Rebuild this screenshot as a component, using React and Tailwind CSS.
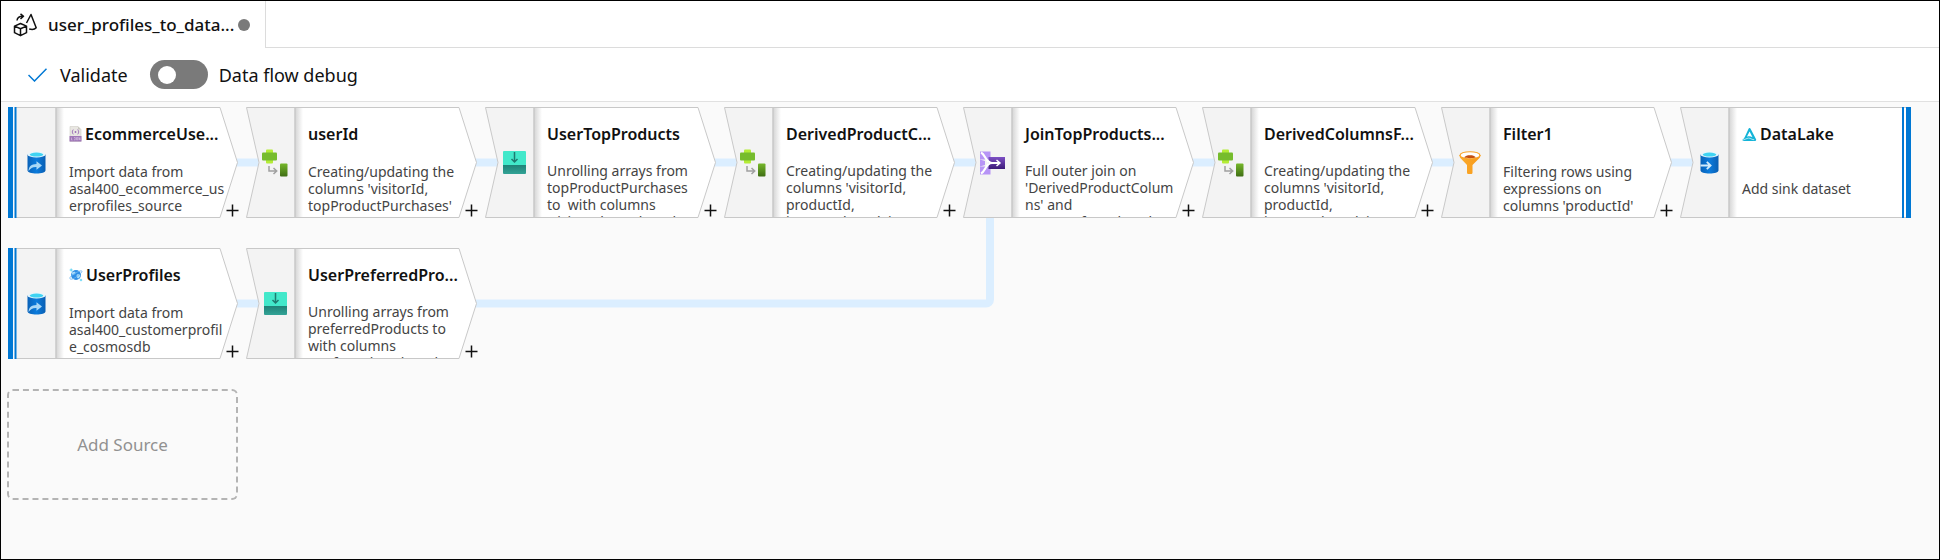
const SourceIcon = () => (
  <svg width="19" height="23" viewBox="0 0 19 23" aria-hidden="true">
    <defs>
      <linearGradient id="srcBody" x1="0" y1="0" x2="1" y2="0">
        <stop offset="0" stopColor="#0a62b8" />
        <stop offset="0.5" stopColor="#0b7bdc" />
        <stop offset="1" stopColor="#0a5fb3" />
      </linearGradient>
    </defs>
    <path d="M0.5 3.5v16c0 1.7 4 3 9 3s9-1.300 9-3v-16z" fill="url(#srcBody)" />
    <ellipse cx="9.500" cy="3.500" rx="9" ry="3" fill="#e6f5fc" />
    <ellipse cx="9.500" cy="3.600" rx="6.800" ry="2" fill="#3fd3f2" />
    <path d="M1.500 20c0.300-4.500 2.800-6.900 8-7v-2.700l5.500 4.300-5.500 4.200v-2.800c-4-0.200-5.500 1-8 4z" fill="#a9d8f6" />
  </svg>
);

const SinkIcon = () => (
  <svg width="19" height="23" viewBox="0 0 19 23" aria-hidden="true">
    <defs>
      <linearGradient id="sinkBody" x1="0" y1="0" x2="1" y2="0">
        <stop offset="0" stopColor="#0a62b8" />
        <stop offset="0.500" stopColor="#0b7bdc" />
        <stop offset="1" stopColor="#0a5fb3" />
      </linearGradient>
    </defs>
    <path d="M0.5 3.5v16c0 1.7 4 3 9 3s9-1.300 9-3v-16z" fill="url(#sinkBody)" />
    <ellipse cx="9.500" cy="3.500" rx="9" ry="3" fill="#e6f5fc" />
    <ellipse cx="9.500" cy="3.600" rx="6.800" ry="2" fill="#3fd3f2" />
    <path d="M0.500 14.500h9.500M6.800 10.800l3.800 3.700-3.800 3.700" fill="none" stroke="#d3ecfb" strokeWidth="1.800" />
  </svg>
);

const DerivedIcon = () => (
  <svg width="26" height="28" viewBox="0 0 26 28" aria-hidden="true">
    <defs>
      <linearGradient id="derCol" x1="0" y1="0" x2="0" y2="1">
        <stop offset="0" stopColor="#76b82a" />
        <stop offset="1" stopColor="#3f6d14" />
      </linearGradient>
    </defs>
    <rect x="4" y="0.500" width="7" height="14" rx="1" fill="#b4ec36" />
    <rect x="0" y="3.500" width="15" height="8" rx="1" fill="#76bc2d" />
    <path d="M7 17v5h7.500M11.500 19l3.200 3-3.200 3" fill="none" stroke="#a0a0a0" strokeWidth="1.500" />
    <rect x="18" y="14.500" width="7.500" height="13" rx="1" fill="url(#derCol)" />
  </svg>
);

const FlattenIcon = () => (
  <svg width="23" height="23" viewBox="0 0 23 23" aria-hidden="true">
    <defs>
      <linearGradient id="flatBase" x1="0" y1="0" x2="0" y2="1">
        <stop offset="0" stopColor="#1f8277" />
        <stop offset="1" stopColor="#32a396" />
      </linearGradient>
    </defs>
    <path d="M1 0h21a1 1 0 0 1 1 1v13H0V1a1 1 0 0 1 1-1z" fill="#42e8ca" />
    <path d="M0 14h23v8a1 1 0 0 1-1 1H1a1 1 0 0 1-1-1z" fill="url(#flatBase)" />
    <path d="M11.500 1v10M8.500 8l3 3 3-3" fill="none" stroke="#1f7a70" strokeWidth="1.500" />
  </svg>
);

const JoinIcon = () => (
  <svg width="25" height="24" viewBox="0 0 25 24" aria-hidden="true">
    <defs>
      <linearGradient id="joinOut" x1="0" y1="0" x2="0" y2="1">
        <stop offset="0" stopColor="#7c4fc4" />
        <stop offset="1" stopColor="#3c1a78" />
      </linearGradient>
    </defs>
    <path d="M0 0.500h10.500v8H0zM0 15.500h10.500v8H0z" fill="#b794f6" />
    <path d="M0 8.500l5 1.500v4l-5 1.500z" fill="#b794f6" />
    <path d="M8.500 6H25v12H8.500z" fill="url(#joinOut)" />
    <path d="M1 1.500c4.500 2 4.500 10.500 11 10.500h7.500M1 22.500c4.500-2 4.500-10.500 11-10.500" fill="none" stroke="#ffffff" strokeWidth="2.200" />
    <path d="M16.500 9l3.500 3-3.500 3" fill="none" stroke="#ffffff" strokeWidth="1.500" />
  </svg>
);

const FilterIcon = () => (
  <svg width="22" height="23" viewBox="0 0 22 23" aria-hidden="true">
    <defs>
      <linearGradient id="funnel" x1="0" y1="0" x2="1" y2="0">
        <stop offset="0" stopColor="#fbab2c" />
        <stop offset="1" stopColor="#f79a1b" />
      </linearGradient>
    </defs>
    <path d="M0.500 4c0 2 0.800 3 1.800 4l5.700 6v7.500c0 1 0.800 1.500 1.500 1.500h2.500c0.800 0 1.500-0.500 1.500-1.500V14l6-6c1-1 2-2 2-4z" fill="url(#funnel)" />
    <ellipse cx="11" cy="4.200" rx="10.500" ry="4" fill="#f9a52a" />
    <ellipse cx="11" cy="4.200" rx="9.300" ry="3" fill="#ffffff" />
    <path d="M5.200 6.300c1-1.500 3.200-2.100 5.800-2.100s4.800 0.600 5.800 2.100c-1.500 0.600-3.500 0.900-5.800 0.900s-4.300-0.300-5.800-0.900z" fill="#c4500f" />
  </svg>
);

const JsonIcon = () => (
  <svg width="13" height="16" viewBox="0 0 13 16" className="shrink-0" aria-hidden="true">
    <path d="M1 0.500h8l3 3v12H1z" fill="#e9e7e2" stroke="#cfccc6" strokeWidth="0.600" />
    <path d="M9 0.500v3h3z" fill="#c9c6bf" />
    <path d="M4.500 3.800c-1 0-0.900 0.500-0.900 1.200 0 0.600-0.200 0.900-0.700 0.900 0.500 0 0.700 0.400 0.700 1 0 0.700 0 1.200 0.900 1.200M8.500 3.800c1 0 0.900 0.500 0.900 1.200 0 0.600 0.200 0.900 0.700 0.900-0.500 0-0.700 0.400-0.700 1 0 0.700 0 1.200-0.900 1.200" fill="none" stroke="#9a6cb4" strokeWidth="0.900" />
    <circle cx="6.500" cy="6" r="0.900" fill="#9a6cb4" />
    <rect x="0.500" y="10" width="12" height="5.500" fill="#a077b8" />
    <path d="M2.500 11.500v2.500h1M5 11.500h1.200v2.300H5M7.500 11.500h1.200v2.300H7.500zM10 14v-2.500l1 2.500v-2.500" fill="none" stroke="#dccbe6" strokeWidth="0.600" />
  </svg>
);

const CosmosIcon = () => (
  <svg width="14" height="14" viewBox="0 0 14 14" className="shrink-0" aria-hidden="true">
    <circle cx="7" cy="7" r="5" fill="#2f8fe6" />
    <path d="M3 4.500c2-1.500 4-0.500 3.500 0.800S4 7 2.600 6.300zM8 6.500c1.500-0.500 3 0 3.500 1.500l-2 2.500c-1.500 0-2.500-3-1.500-4z" fill="#a7dcfb" />
    <path d="M1 10.800C0 9.500 3 7 6.500 5S13 2.200 13 3.300 11 6.500 7.500 8.800 1.800 11.800 1 10.800z" fill="none" stroke="#6fb4ef" strokeWidth="0.800" />
    <path d="M2.200 0.500v3M0.700 2h3M12 10.800v2.400M10.800 12h2.400" stroke="#5ad3f5" strokeWidth="1" />
  </svg>
);

const LakeIcon = () => (
  <svg width="15" height="15" viewBox="0 0 16 15" className="shrink-0" aria-hidden="true">
    <path d="M8 0.500c0.700 0 1 0.500 1.300 1.100l5.700 11c0.400 0.900 0 1.700-1 1.700H2.500c-1 0-1.800-0.300-2.300-0.900 1.400-1 2.300-2.200 3-3.700L7 1.400c0.200-0.500 0.500-0.900 1-0.900z" fill="#14b4d8" />
    <path d="M8.100 4.200L5.200 9.800c2.600-1 4.200-0.300 6 0.600z" fill="#ffffff" />
    <path d="M1.500 13c3.500-0.600 4.500-2.300 7-1.400 1.500 0.500 2.500 1.500 4.500 1.400" fill="none" stroke="#ffffff" strokeWidth="0.700" />
  </svg>
);

const DataflowIcon = () => (
  <svg width="24" height="24" viewBox="0 0 24 24" fill="none" stroke="#111111" strokeWidth="1.500" strokeLinejoin="round" className="shrink-0" aria-hidden="true">
    <path d="M7.500 10.500l6 2.600v6.600l-6 3-6-3v-6.600zM1.500 13.100l6 2.600 6-2.600M7.500 15.700v7" />
    <path d="M13.500 10l4.500-8.500 5.200 13.200c-1.400 1.700-4.500 2-7 1.300" />
    <path d="M4 7.500c0.300-2.700 2-4.200 5.500-4.200M7.500 0.800l3 2.500-3 2.700" />
  </svg>
);

const ICONS = {
  source: SourceIcon,
  sink: SinkIcon,
  derived: DerivedIcon,
  flatten: FlattenIcon,
  join: JoinIcon,
  filter: FilterIcon,
};

const BADGES = { json: JsonIcon, cosmos: CosmosIcon, lake: LakeIcon };

const OUTLINES = {
  source: { shape: "M9 0.500H213L230.500 55.500L213 110.500H9", strip: "M9 0.500H49V110.500H9z" },
  step: {
    shape: "M0.500 0.500H213L230.500 55.500L213 110.500H0.500L13 55.500z",
    strip: "M0.500 0.500H49V110.500H0.500L13 55.500z",
  },
  sink: {
    shape: "M0.500 0.500H230.500V110.500H0.500L13 55.500z",
    strip: "M0.500 0.500H49V110.500H0.500L13 55.500z",
  },
};

const TOP_ROW = [
  { title: "EcommerceUse...", icon: "source", badge: "json", kind: "source", text: "Import data from\nasal400_ecommerce_us\nerprofiles_source" },
  { title: "userId", icon: "derived", text: "Creating/updating the\ncolumns 'visitorId,\ntopProductPurchases'" },
  { title: "UserTopProducts", icon: "flatten", text: "Unrolling arrays from\ntopProductPurchases\nto  with columns\n'visitorId, productId", tight: true },
  { title: "DerivedProductC...", icon: "derived", text: "Creating/updating the\ncolumns 'visitorId,\nproductId,\nitemProductId, in 12", tight: true },
  { title: "JoinTopProducts...", icon: "join", text: "Full outer join on\n'DerivedProductColum\nns' and\n'UserPreferredProd", tight: true },
  { title: "DerivedColumnsF...", icon: "derived", text: "Creating/updating the\ncolumns 'visitorId,\nproductId,\nitemProductId, in 12", tight: true },
  { title: "Filter1", icon: "filter", text: "Filtering rows using\nexpressions on\ncolumns 'productId'" },
  { title: "DataLake", icon: "sink", badge: "lake", kind: "sink", text: "Add sink dataset", single: true },
];

const SECOND_ROW = [
  { title: "UserProfiles", icon: "source", badge: "cosmos", kind: "source", text: "Import data from\nasal400_customerprofil\ne_cosmosdb" },
  { title: "UserPreferredPro...", icon: "flatten", text: "Unrolling arrays from\npreferredProducts to\nwith columns\n'preferredProductId", tight: true },
];

function Node({ title, icon, badge, kind = "step", text, tight, single }) {
  const Icon = ICONS[icon];
  const Badge = badge ? BADGES[badge] : null;
  const outline = OUTLINES[kind];
  const offset = single ? "mt-[34px]" : tight ? "mt-4" : "mt-[17px]";
  return (
    <article className="relative flex h-[111px] w-[231px] shrink-0">
      <svg className="absolute inset-0" width="231" height="111" viewBox="0 0 231 111" aria-hidden="true">
        <defs>
          <linearGradient id="edgeShade" x1="0" y1="0" x2="1" y2="0">
            <stop offset="0" stopColor="#d4d4d4" />
            <stop offset="1" stopColor="#ffffff" />
          </linearGradient>
        </defs>
        <path d={outline.shape} fill="#ffffff" />
        <path d={outline.strip} fill="#f3f3f3" />
        <rect x="49" y="1" width="8" height="109" fill="url(#edgeShade)" />
        <path d="M49 0v111" stroke="#c8c8c8" strokeWidth="1.500" />
        <path d={outline.shape} fill="none" stroke="#c8c8c8" />
        {kind === "source" && <path d="M1 0h5v111H1zM7.500 0h2v111h-2z" fill="#0078d4" />}
        {kind === "sink" && <path d="M222 0h2v111h-2zM226 0h5v111h-5z" fill="#0078d4" />}
      </svg>
      <div className={`relative flex w-12 shrink-0 items-center justify-center ${kind === "source" ? "pl-[11px]" : "pl-2.5"}`}>
        <Icon />
      </div>
      <div className="relative flex h-[110px] min-w-0 flex-1 flex-col overflow-hidden pt-[15px] pl-[14px]">
        <h2 className="flex h-6 items-center gap-[3px] text-base leading-6 font-semibold whitespace-nowrap text-[#111111]">
          {Badge && <Badge />}
          {title}
        </h2>
        <p className={`${offset} text-sm leading-[17px] whitespace-pre text-[#444444]`}>{text}</p>
      </div>
      {kind !== "sink" && (
        <button type="button" aria-label={`Add step after ${title}`} className="absolute -right-0.5 bottom-0 flex size-4 items-center justify-center">
          <svg width="13" height="13" viewBox="0 0 13 13" aria-hidden="true">
            <path d="M6.500 0.500v12M0.500 6.500h12" stroke="#111111" strokeWidth="1.500" />
          </svg>
        </button>
      )}
    </article>
  );
}

export default function App() {
  return (
    <main className="flex min-h-screen flex-col border border-black bg-white font-['Noto_Sans','Open_Sans',sans-serif] text-[#111111]">
      <header className="flex h-[47px]">
        <div className="flex w-[265px] shrink-0 items-center gap-[11px] border-r border-[#dcdcdc] pl-3">
          <DataflowIcon />
          <div className="flex items-center gap-1">
            <h1 className="text-[17px] leading-6 font-medium whitespace-nowrap">user_profiles_to_data...</h1>
            <span className="size-3 shrink-0 rounded-full bg-[#7a7a7a]" />
          </div>
        </div>
        <div className="flex-1 border-b border-[#dcdcdc]" />
      </header>

      <div className="flex h-[54px] items-center border-b border-[#e1e1e1] pl-[27px]">
        <button type="button" className="flex items-center gap-[13px] text-lg leading-6">
          <svg width="19" height="14" viewBox="0 0 19 14" fill="none" stroke="#0078d4" strokeWidth="1.500" aria-hidden="true">
            <path d="M0.500 7l6 6L18.500 0.800" />
          </svg>
          Validate
        </button>
        <label className="ml-[22px] flex items-center gap-[11px] text-lg leading-6">
          <input type="checkbox" role="switch" className="peer sr-only" />
          <span className="flex h-[29px] w-[58px] items-center rounded-full bg-[#7a7a7a] px-2 peer-checked:justify-end">
            <span className="size-[18px] rounded-full bg-white" />
          </span>
          Data flow debug
        </label>
      </div>

      <section className="flex flex-1 flex-col gap-[30px] overflow-hidden bg-[#fafafa] pt-[5px] pl-1.5">
        <div className="relative flex flex-col gap-[30px]">
          <svg className="absolute top-0 left-0" width="1904" height="252" viewBox="0 0 1904 252" fill="none" stroke="#dbeeff" strokeWidth="8" aria-hidden="true">
            <path d="M200 55.500H1700M200 196.500H979a4 4 0 0 0 4-4V100" />
          </svg>
          <div className="flex gap-2">
            {TOP_ROW.map((node) => (
              <Node key={node.title} {...node} />
            ))}
          </div>
          <div className="flex gap-2">
            {SECOND_ROW.map((node) => (
              <Node key={node.title} {...node} />
            ))}
          </div>
        </div>
        <button type="button" className="flex h-[111px] w-[231px] items-center justify-center rounded-md border-2 border-dashed border-[#b4b4b4] text-[17px] leading-6 text-[#919191]">
          Add Source
        </button>
      </section>
    </main>
  );
}
